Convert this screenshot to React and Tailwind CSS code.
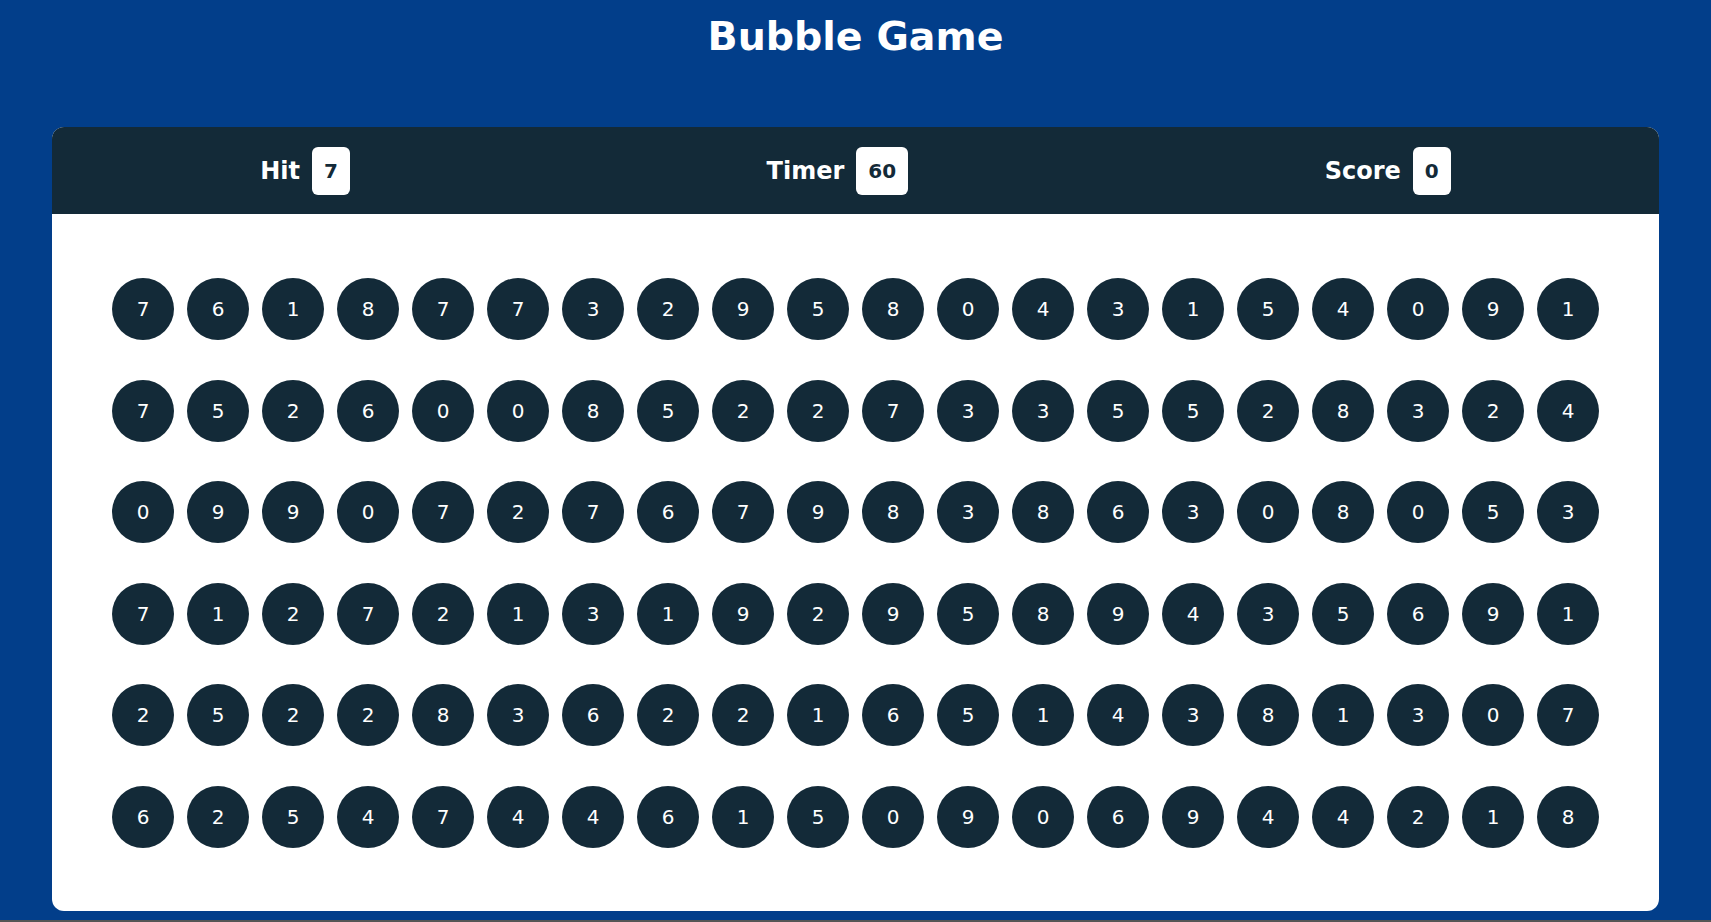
import React from 'react';

const rows = [
  [7, 6, 1, 8, 7, 7, 3, 2, 9, 5, 8, 0, 4, 3, 1, 5, 4, 0, 9, 1],
  [7, 5, 2, 6, 0, 0, 8, 5, 2, 2, 7, 3, 3, 5, 5, 2, 8, 3, 2, 4],
  [0, 9, 9, 0, 7, 2, 7, 6, 7, 9, 8, 3, 8, 6, 3, 0, 8, 0, 5, 3],
  [7, 1, 2, 7, 2, 1, 3, 1, 9, 2, 9, 5, 8, 9, 4, 3, 5, 6, 9, 1],
  [2, 5, 2, 2, 8, 3, 6, 2, 2, 1, 6, 5, 1, 4, 3, 8, 1, 3, 0, 7],
  [6, 2, 5, 4, 7, 4, 4, 6, 1, 5, 0, 9, 0, 6, 9, 4, 4, 2, 1, 8],
];

const Stat = ({ label, value }) => (
  <div className="flex items-center gap-3">
    <span className="text-[24px] font-bold text-white">{label}</span>
    <span className="px-3 py-3 text-[20px] leading-6 font-bold rounded-md bg-white text-[#132a38]">
      {value}
    </span>
  </div>
);

export default function App() {
  return (
    <div style={{ fontFamily: '"DejaVu Sans", Verdana, sans-serif' }}>
      <div className="h-[920px] bg-[#023e8a] pt-[13px]">
        <h1 className="text-center text-[39.5px] leading-[46px] font-bold text-white">
          Bubble Game
        </h1>

        <div className="mx-auto mt-[68px] w-[1607px] h-[784px] rounded-xl overflow-hidden bg-white flex flex-col">
          {/* Header */}
          <div className="h-[87px] bg-[#132a38] flex items-center justify-around">
            <Stat label="Hit" value="7" />
            <Stat label="Timer" value="60" />
            <Stat label="Score" value="0" />
          </div>

          {/* Bubbles */}
          <div className="flex-1 flex flex-col items-center pt-[64px] gap-[39.5px]">
            {rows.map((row, i) => (
              <div key={i} className="flex gap-[13px]">
                {row.map((n, j) => (
                  <div
                    key={j}
                    className="w-[62px] h-[62px] rounded-full bg-[#132a38] text-white text-[20px] flex items-center justify-center"
                  >
                    {n}
                  </div>
                ))}
              </div>
            ))}
          </div>
        </div>
      </div>
      <div className="h-[2px] bg-[#555555]" />
    </div>
  );
}
